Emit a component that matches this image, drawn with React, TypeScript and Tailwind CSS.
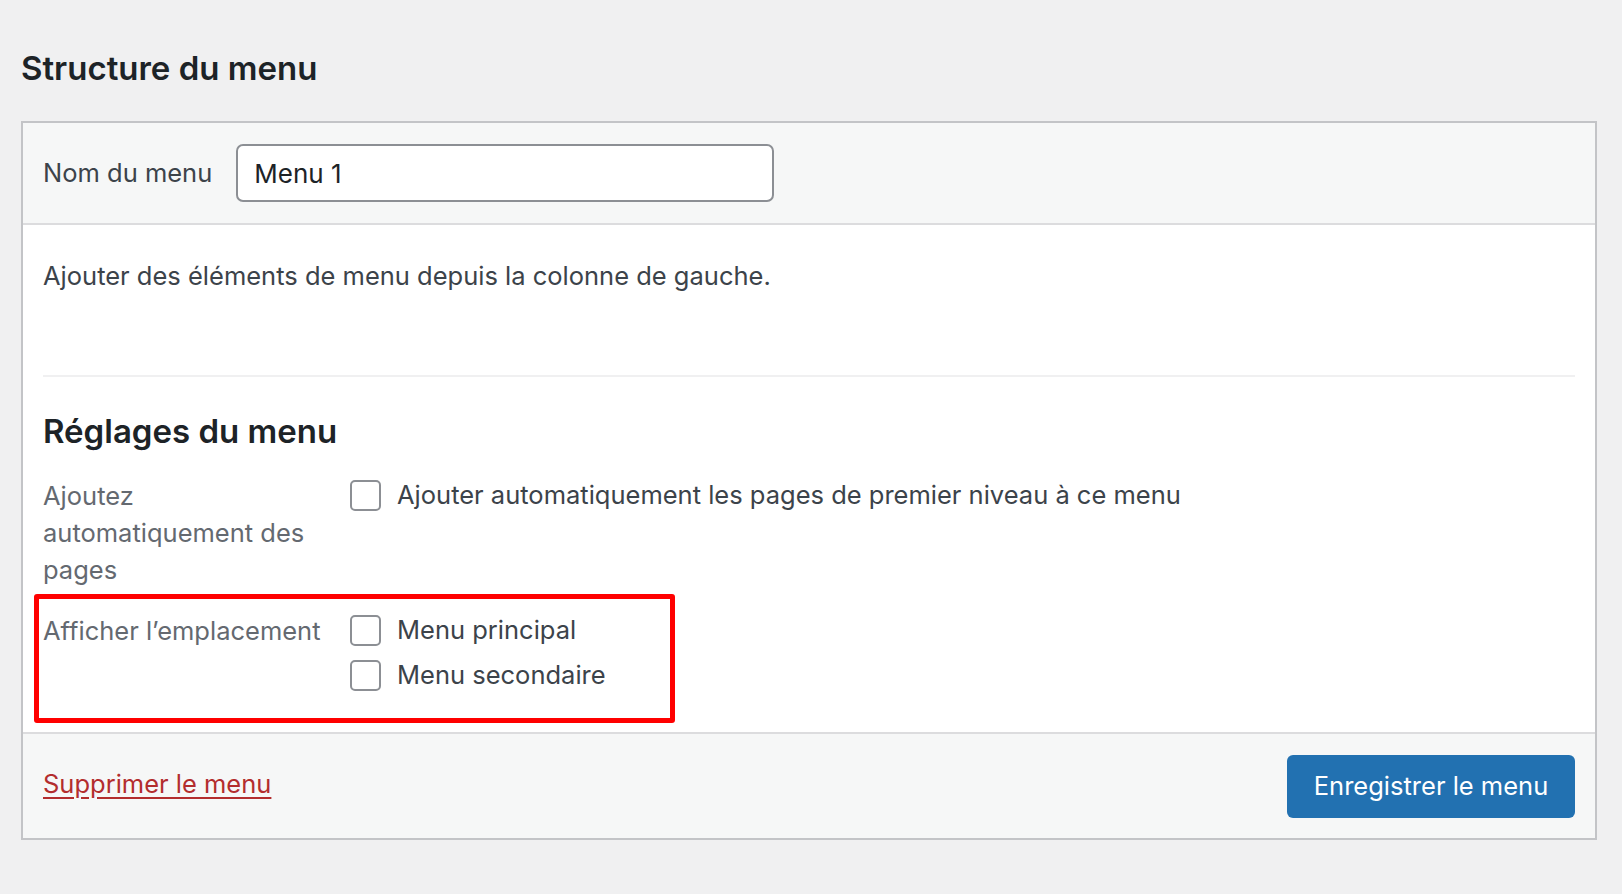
export default function App() {
  const cb = "w-[31px] h-[31px] rounded-[5px] border-2 border-[#8c8f94] bg-white shrink-0";
  return (
    <div className="w-[1622px] h-[894px] bg-[#f0f0f1] text-[#1d2327] relative" style={{ fontFamily: "Inter, 'Noto Sans', sans-serif" }}>
      <div className="pt-[48px] pl-[21px]">
        <h1 className="text-[33px] font-semibold leading-[40px]">Structure du menu</h1>
      </div>
      <div className="mt-[33px] ml-[21px] w-[1576px] border-2 border-[#c3c4c7] bg-white">
        <div className="h-[102px] bg-[#f6f7f7] border-b-2 border-[#dcdcde] flex items-center px-[20px] gap-[24px]">
          <span className="text-[25.5px] text-[#3c434a]">Nom du menu</span>
          <div className="w-[538px] h-[58px] border-2 border-[#8c8f94] rounded-[7px] bg-white flex items-center px-[16px] text-[26px]">Menu 1</div>
        </div>
        <div className="px-[20px]">
          <p className="text-[25.5px] text-[#3c434a] pt-[34px] leading-[34px]">Ajouter des éléments de menu depuis la colonne de gauche.</p>
          <div className="mt-[82px] border-t-2 border-[#f0f0f1]" />
          <h2 className="text-[33px] font-semibold mt-[32px] leading-[44px]">Réglages du menu</h2>
          <div className="flex mt-[24px]">
            <div className="w-[307px] text-[25.5px] leading-[37px] text-[#646970]">Ajoutez<br />automatiquement des<br />pages</div>
            <label className="flex items-center gap-[16px] h-[37px] text-[25.5px] text-[#3c434a]"><span className={cb} />Ajouter automatiquement les pages de premier niveau à ce menu</label>
          </div>
          <div className="flex mt-[24px] pb-[38px]">
            <div className="w-[307px] text-[25.5px] leading-[37px] text-[#646970]">Afficher l’emplacement</div>
            <div className="flex flex-col gap-[8px]">
              <label className="flex items-center gap-[16px] h-[37px] text-[25.5px] text-[#3c434a]"><span className={cb} />Menu principal</label>
              <label className="flex items-center gap-[16px] h-[37px] text-[25.5px] text-[#3c434a]"><span className={cb} />Menu secondaire</label>
            </div>
          </div>
        </div>
        <div className="h-[106px] bg-[#f6f7f7] border-t-2 border-[#dcdcde] flex items-center justify-between px-[20px]">
          <a className="text-[25.5px] text-[#b32d2e] underline underline-offset-4 -mt-[4px]">Supprimer le menu</a>
          <button className="w-[288px] h-[63px] rounded-[6px] bg-[#2271b1] text-white text-[25.5px]">Enregistrer le menu</button>
        </div>
      </div>
      <div className="absolute left-[34px] top-[594px] w-[641px] h-[129px] border-[5px] border-[#ff0000] rounded-[3px]" />
    </div>
  );
}
